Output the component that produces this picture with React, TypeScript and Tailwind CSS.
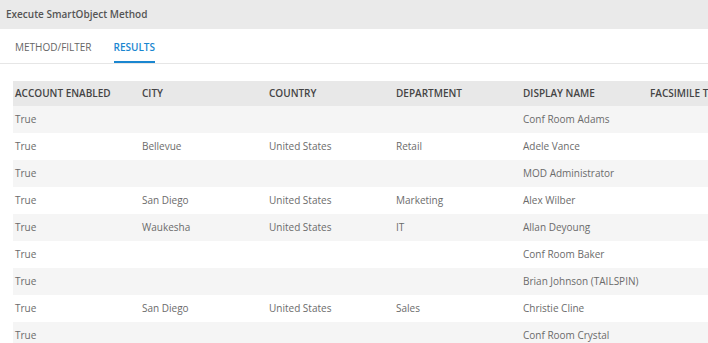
import React from "react";

const cols = ["ACCOUNT ENABLED", "CITY", "COUNTRY", "DEPARTMENT", "DISPLAY NAME", "FACSIMILE TELEPHONE NUMBER"];

const rows: string[][] = [
  ["True", "", "", "", "Conf Room Adams"],
  ["True", "Bellevue", "United States", "Retail", "Adele Vance"],
  ["True", "", "", "", "MOD Administrator"],
  ["True", "San Diego", "United States", "Marketing", "Alex Wilber"],
  ["True", "Waukesha", "United States", "IT", "Allan Deyoung"],
  ["True", "", "", "", "Conf Room Baker"],
  ["True", "", "", "", "Brian Johnson (TAILSPIN)"],
  ["True", "San Diego", "United States", "Sales", "Christie Cline"],
  ["True", "", "", "", "Conf Room Crystal"],
];

export default function App() {
  return (
    <div
      className="w-[708px] h-[343px] overflow-hidden bg-white"
      style={{ fontFamily: '"Open Sans", "Liberation Sans", sans-serif' }}
    >
      <div className="h-[29px] bg-[#eaeaea] flex items-center pl-[6px] text-[10px] font-semibold text-[#555555]">
        Execute SmartObject Method
      </div>
      <div className="h-[35px] border-b border-[#e6e6e6] flex items-stretch pl-[15px] gap-[22px] text-[10px]">
        <div className="flex items-center text-[#666666] pt-[2px]">METHOD/FILTER</div>
        <div className="flex items-center text-[#1a86d0] font-semibold border-b-2 border-[#1a86d0] pt-[4px]">RESULTS</div>
      </div>
      <div className="pt-[17px] pl-[13px]">
        <div className="w-[800px]">
          <div className="flex h-[25px] bg-[#e8e8e8] items-center text-[10px] font-semibold text-[#444444]">
            {cols.map((c) => (
              <div key={c} className="w-[127px] shrink-0 pl-[2px] whitespace-nowrap">
                {c}
              </div>
            ))}
          </div>
          {rows.map((r, i) => (
            <div
              key={i}
              className={`flex h-[27px] items-center text-[10px] text-[#6b6b6b] ${i % 2 === 0 ? "bg-[#f5f5f5]" : "bg-white"}`}
            >
              {r.map((v, j) => (
                <div key={j} className="w-[127px] shrink-0 pl-[2px] whitespace-nowrap">
                  {v}
                </div>
              ))}
            </div>
          ))}
        </div>
      </div>
    </div>
  );
}
